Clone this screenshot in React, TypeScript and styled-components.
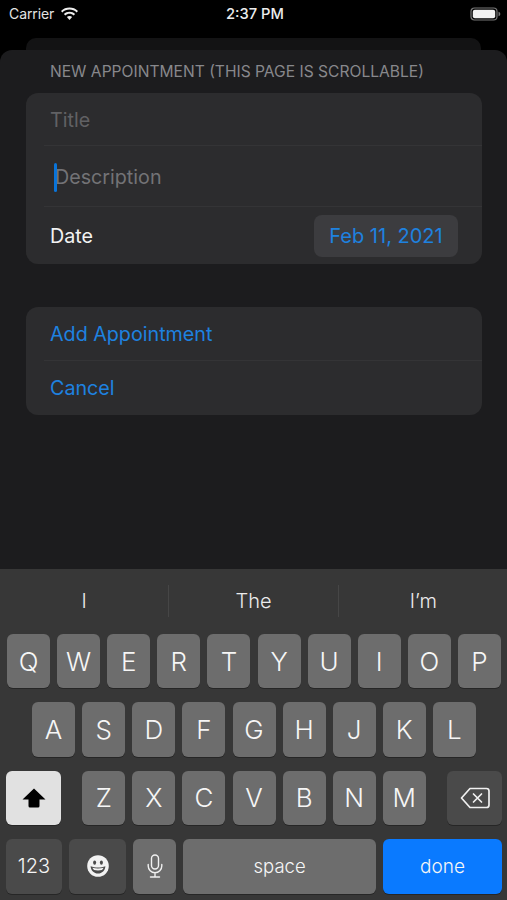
import React from 'react';
import styled, { createGlobalStyle } from 'styled-components';

const GlobalStyle = createGlobalStyle`
  html, body {
    margin: 0;
    padding: 0;
    background: #000;
  }
  * {
    box-sizing: border-box;
  }
`;

const Phone = styled.div`
  width: 507px;
  height: 900px;
  display: flex;
  flex-direction: column;
  overflow: hidden;
  background: #000;
  font-family: Inter, "Liberation Sans", sans-serif;
  color: #fff;
`;

const StatusBar = styled.div`
  height: 38px;
  flex: none;
  display: grid;
  grid-template-columns: 1fr auto 1fr;
  align-items: center;
  padding: 0 6px 11px 9px;
  font-size: 14px;
`;

const Carrier = styled.div`
  display: flex;
  align-items: center;
  gap: 6px;
  color: #e4e4e4;
  font-size: 14px;
  letter-spacing: -0.1px;
`;

const Clock = styled.div`
  font-weight: 500;
  font-size: 14.7px;
  color: #ececec;
`;

const BatteryWrap = styled.div`
  justify-self: end;
  display: flex;
`;

const BackCard = styled.div`
  height: 12px;
  flex: none;
  margin: 0 26px;
  background: #131314;
  border-radius: 10px 10px 0 0;
`;

const Sheet = styled.div`
  flex: 1;
  background: #1c1c1e;
  border-radius: 12px 12px 0 0;
  padding: 0 25px 0 26px;
`;

const SectionTitle = styled.div`
  height: 43px;
  padding: 0 0 0 24px;
  display: flex;
  align-items: center;
  font-size: 15.6px;
  color: #88888c;
  white-space: nowrap;
`;

const Group = styled.div`
  background: #2c2c2e;
  border-radius: 12px;
  padding-left: 18px;
  margin-bottom: 43px;
`;

const Row = styled.div<{ $height: number; $divider?: boolean; $nudge?: number }>`
  height: ${p => p.$height}px;
  display: flex;
  align-items: center;
  justify-content: space-between;
  padding: ${p => p.$nudge || 0}px 24px 0 6px;
  font-size: 19.7px;
  border-bottom: ${p => (p.$divider ? '1px solid #343436' : 'none')};
`;

const Placeholder = styled.span`
  color: #616164;
  position: relative;
`;

const Caret = styled.span`
  position: absolute;
  left: 4px;
  top: -2px;
  width: 3px;
  height: 29px;
  border-radius: 2px;
  background: #0a74d8;
`;

const Description = styled(Placeholder)`
  padding-left: 5px;
  color: #737376;
`;

const Label = styled.span`
  color: #f2f2f2;
`;

const ActionText = styled.span`
  color: #1e82e0;
`;

const DateButton = styled.div`
  width: 144px;
  height: 42px;
  border-radius: 8px;
  background: #3c3c3f;
  color: #1e82e0;
  font-size: 20px;
  display: flex;
  align-items: center;
  justify-content: center;
`;

const Keyboard = styled.div`
  height: 331px;
  flex: none;
  background: #373737;
  padding: 0 5px 7px 6px;
  display: flex;
  flex-direction: column;
`;

const Suggestions = styled.div`
  height: 65px;
  flex: none;
  margin: 0 -6px 0 -6px;
  display: grid;
  grid-template-columns: repeat(3, 1fr);
  align-items: center;
  padding-bottom: 2px;
`;

const Suggestion = styled.div<{ $divider?: boolean }>`
  height: 32px;
  display: flex;
  align-items: center;
  justify-content: center;
  font-size: 20px;
  font-weight: 300;
  color: #ececec;
  border-right: ${p => (p.$divider ? '1px solid #464646' : 'none')};
`;

const KeyRows = styled.div`
  display: flex;
  flex-direction: column;
  gap: 14px;
`;

const KeyRow = styled.div<{ $between?: boolean }>`
  height: 54.4px;
  display: flex;
  justify-content: ${p => (p.$between ? 'space-between' : 'center')};
  gap: 7.1px;
`;

const LetterGroup = styled.div`
  display: flex;
  gap: 7.1px;
`;

const Key = styled.div<{ $width?: number; $grow?: boolean; $tone?: 'light' | 'dark' | 'white' | 'blue'; $size?: number }>`
  width: ${p => (p.$width ? `${p.$width}px` : '43px')};
  flex: ${p => (p.$grow ? '1' : 'none')};
  height: 100%;
  border-radius: 6px;
  display: flex;
  align-items: center;
  justify-content: center;
  font-size: ${p => p.$size || 26}px;
  font-weight: 300;
  color: #f6f6f6;
  background: ${p =>
    p.$tone === 'dark' ? '#4a4a4a' : p.$tone === 'white' ? '#e1e1e1' : p.$tone === 'blue' ? '#0a7aff' : '#6d6d6d'};
  box-shadow: 0 1px 0 #262626;
`;

const WifiIcon = () => (
  <svg width="19" height="14" viewBox="0 0 19 14">
    <path d="M9.5 2.6c2.7 0 5.2 1 7.1 2.8l1.4-1.5C15.700 1.700 12.700.5 9.500.5S3.300 1.700 1 3.900l1.400 1.500C4.300 3.600 6.800 2.600 9.500 2.600z" fill="#eee" />
    <path d="M9.500 6.800c1.600 0 3 .6 4.200 1.600l1.400-1.500C13.600 5.500 11.600 4.700 9.500 4.700s-4.100.8-5.600 2.200l1.400 1.500c1.200-1 2.600-1.600 4.200-1.600z" fill="#eee" />
    <path d="M9.500 9c-1 0-1.900.4-2.600 1l2.600 2.900 2.600-2.900C11.400 9.400 10.500 9 9.500 9z" fill="#eee" />
  </svg>
);

const BatteryIcon = () => (
  <svg width="31" height="14" viewBox="0 0 31 14">
    <rect x="1" y="1" width="26" height="12" rx="3.500" fill="none" stroke="#777" strokeWidth="1.200" />
    <rect x="2.800" y="2.800" width="22.400" height="8.400" rx="2" fill="#f2f2f2" />
    <path d="M28.500 4.800c1 .3 1.800 1.100 1.800 2.200s-.8 1.900-1.800 2.200z" fill="#777" />
  </svg>
);

const ShiftIcon = () => (
  <svg width="24" height="22" viewBox="0 0 24 22">
    <path d="M12 1.500 23.500 12.500h-6V19a1.500 1.500 0 0 1-1.500 1.500H8A1.500 1.500 0 0 1 6.500 19v-6.500h-6z" fill="#000" />
  </svg>
);

const BackspaceIcon = () => (
  <svg width="30" height="22" viewBox="0 0 30 22" fill="none" stroke="#f0f0f0" strokeWidth="1.700" strokeLinecap="round" strokeLinejoin="round">
    <path d="M10 1.500h16.500a2.500 2.500 0 0 1 2.500 2.500v14a2.500 2.500 0 0 1-2.500 2.500H10L1.500 11z" />
    <path d="m13.500 7 8 8m0-8-8 8" />
  </svg>
);

const EmojiIcon = () => (
  <svg width="22" height="22" viewBox="0 0 22 22">
    <circle cx="11" cy="11" r="10.800" fill="#f2f2f2" />
    <ellipse cx="7.600" cy="7.600" rx="1.500" ry="2.200" fill="#4a4a4a" />
    <ellipse cx="14.400" cy="7.600" rx="1.500" ry="2.200" fill="#4a4a4a" />
    <path d="M3.600 11.300c2.300.9 4.800 1.300 7.400 1.300s5.100-.4 7.400-1.300c-.3 4.300-3.400 7.300-7.400 7.300s-7.100-3-7.400-7.300z" fill="#4a4a4a" />
    <path d="M5.400 12.800c1.800.4 3.700.6 5.600.6s3.800-.2 5.600-.6c-.4 1-1 1.700-1.700 2.300-1.200.3-2.500.4-3.900.4s-2.700-.1-3.900-.4c-.7-.6-1.300-1.300-1.700-2.300z" fill="#f2f2f2" />
  </svg>
);

const MicIcon = () => (
  <svg width="16" height="24" viewBox="0 0 16 24" fill="none" stroke="#f0f0f0" strokeWidth="1.400" strokeLinecap="round">
    <rect x="4.500" y="1" width="7" height="14" rx="3.500" />
    <path d="M1.200 10.500v1.500a6.800 6.800 0 0 0 13.600 0v-1.500M8 18.800V23M3.500 23h9" />
  </svg>
);

const App: React.FC = () => {
  return (
    <Phone>
      <GlobalStyle />
      <StatusBar>
        <Carrier>
          Carrier
          <WifiIcon />
        </Carrier>
        <Clock>2:37 PM</Clock>
        <BatteryWrap>
          <BatteryIcon />
        </BatteryWrap>
      </StatusBar>
      <BackCard />
      <Sheet>
        <SectionTitle>NEW APPOINTMENT (THIS PAGE IS SCROLLABLE)</SectionTitle>
        <Group>
          <Row $height={53} $divider $nudge={2}>
            <Placeholder>Title</Placeholder>
          </Row>
          <Row $height={61} $divider $nudge={1}>
            <Description>
              <Caret />
              Description
            </Description>
          </Row>
          <Row $height={57}>
            <Label>Date</Label>
            <DateButton>Feb 11, 2021</DateButton>
          </Row>
        </Group>
        <Group>
          <Row $height={54} $divider>
            <ActionText>Add Appointment</ActionText>
          </Row>
          <Row $height={54}>
            <ActionText>Cancel</ActionText>
          </Row>
        </Group>
      </Sheet>
      <Keyboard>
        <Suggestions>
          <Suggestion $divider>I</Suggestion>
          <Suggestion $divider>The</Suggestion>
          <Suggestion>I’m</Suggestion>
        </Suggestions>
        <KeyRows>
          <KeyRow>
            {'QWERTYUIOP'.split('').map(k => (
              <Key key={k}>{k}</Key>
            ))}
          </KeyRow>
          <KeyRow>
            {'ASDFGHJKL'.split('').map(k => (
              <Key key={k}>{k}</Key>
            ))}
          </KeyRow>
          <KeyRow $between>
            <Key $width={55} $tone="white">
              <ShiftIcon />
            </Key>
            <LetterGroup>
              {'ZXCVBNM'.split('').map(k => (
                <Key key={k}>{k}</Key>
              ))}
            </LetterGroup>
            <Key $width={55} $tone="dark">
              <BackspaceIcon />
            </Key>
          </KeyRow>
          <KeyRow>
            <Key $width={56} $tone="dark" $size={20}>123</Key>
            <Key $width={57} $tone="dark">
              <EmojiIcon />
            </Key>
            <Key $tone="light">
              <MicIcon />
            </Key>
            <Key $grow $size={18.5}>space</Key>
            <Key $width={119} $tone="blue" $size={19}>done</Key>
          </KeyRow>
        </KeyRows>
      </Keyboard>
    </Phone>
  );
};

export default App;
